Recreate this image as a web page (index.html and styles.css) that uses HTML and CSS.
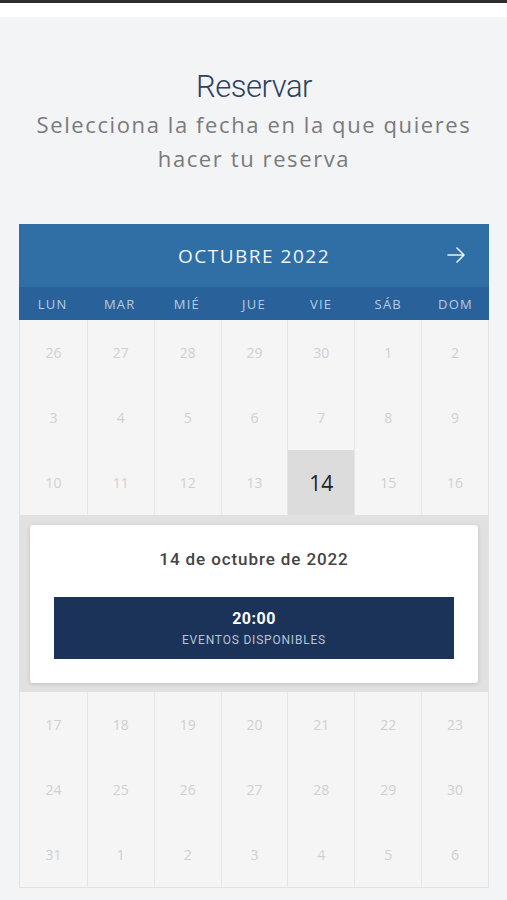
FILE: index.html
```html
<!DOCTYPE html>
<html lang="es">
<head>
    <meta charset="UTF-8">
    <meta name="viewport" content="width=device-width, initial-scale=1.0">
    <title>Reservar</title>
    <link rel="stylesheet" href="styles.css">
</head>
<body>
    <div class="topbar"></div>
    <div class="band"></div>

    <main class="page">
        <div class="intro">
            <h1>Reservar</h1>
            <p>Selecciona la fecha en la que quieres hacer tu reserva</p>
        </div>

        <div class="calendar">
            <div class="cal-head">
                <span class="month">OCTUBRE 2022</span>
                <button class="next" aria-label="Siguiente">
                    <svg width="20" height="20" viewBox="0 0 20 20" fill="none" stroke="currentColor" stroke-width="1.6" stroke-linecap="round" stroke-linejoin="round">
                        <path d="M2 10h16M11 3l7 7-7 7"/>
                    </svg>
                </button>
            </div>
            <div class="weekdays">
                <span>LUN</span><span>MAR</span><span>MIÉ</span><span>JUE</span><span>VIE</span><span>SÁB</span><span>DOM</span>
            </div>

            <div class="week">
                <div class="day">26</div><div class="day">27</div><div class="day">28</div><div class="day">29</div><div class="day">30</div><div class="day">1</div><div class="day">2</div>
            </div>
            <div class="week">
                <div class="day">3</div><div class="day">4</div><div class="day">5</div><div class="day">6</div><div class="day">7</div><div class="day">8</div><div class="day">9</div>
            </div>
            <div class="week">
                <div class="day">10</div><div class="day">11</div><div class="day">12</div><div class="day">13</div><div class="day selected">14</div><div class="day">15</div><div class="day">16</div>
            </div>

            <div class="detail">
                <div class="card">
                    <div class="card-date">14 de octubre de 2022</div>
                    <button class="slot">
                        <span class="slot-time">20:00</span>
                        <span class="slot-label">EVENTOS DISPONIBLES</span>
                    </button>
                </div>
            </div>

            <div class="week">
                <div class="day">17</div><div class="day">18</div><div class="day">19</div><div class="day">20</div><div class="day">21</div><div class="day">22</div><div class="day">23</div>
            </div>
            <div class="week">
                <div class="day">24</div><div class="day">25</div><div class="day">26</div><div class="day">27</div><div class="day">28</div><div class="day">29</div><div class="day">30</div>
            </div>
            <div class="week">
                <div class="day">31</div><div class="day">1</div><div class="day">2</div><div class="day">3</div><div class="day">4</div><div class="day">5</div><div class="day">6</div>
            </div>
        </div>
    </main>
</body>
</html>
```

FILE: styles.css
```css
body {
    margin: 0;
    background: #f3f4f6;
    font-family: "Open Sans", sans-serif;
}

.topbar {
    height: 3px;
    background: #2e2e2e;
}
.band {
    height: 14px;
    background: #fff;
}

.page {
    padding: 0 18px 20px 19px;
}

.intro {
    text-align: center;
    padding-top: 51px;
    padding-bottom: 49px;
}
.intro h1 {
    margin: 0;
    font-family: Roboto, sans-serif;
    font-weight: 300;
    font-size: 31px;
    line-height: 38px;
    color: #2d4160;
    letter-spacing: -0.5px;
}
.intro p {
    margin: 1px auto 0;
    max-width: 470px;
    font-family: "Open Sans", sans-serif;
    font-size: 22px;
    line-height: 34px;
    color: #7a7a7a;
    letter-spacing: 1.6px;
}

.calendar {
    border: 1px solid #e2e2e2;
    border-top: none;
    background: #f5f5f5;
}

.cal-head {
    height: 63px;
    background: #2f6fa5;
    display: flex;
    align-items: center;
    justify-content: center;
    position: relative;
    margin: 0 -1px;
}
.month {
    color: #f2f6fa;
    font-size: 19px;
    letter-spacing: 1.5px;
}
.next {
    position: absolute;
    right: 23px;
    top: 21px;
    background: none;
    border: none;
    padding: 0;
    color: #e8f0f8;
    cursor: pointer;
}

.weekdays {
    height: 33px;
    background: #29619a;
    display: grid;
    grid-template-columns: repeat(7, 1fr);
    align-items: center;
    text-align: center;
    margin: 0 -1px;
}
.weekdays span {
    color: #b9cde2;
    font-size: 13px;
    font-weight: 500;
    letter-spacing: 1.2px;
}

.week {
    display: grid;
    grid-template-columns: repeat(7, 1fr);
}
.day {
    height: 65px;
    display: flex;
    align-items: center;
    justify-content: center;
    font-size: 14px;
    color: #d0d0d0;
    border-left: 1px solid #e6e6e6;
}
.day:first-child {
    border-left: none;
}
.day.selected {
    background: #dcdcdc;
    color: #222;
    font-size: 21px;
}

.detail {
    background: #e1e1e1;
    padding: 10px 10px 9px;
}
.card {
    background: #fff;
    border-radius: 3px;
    box-shadow: 0 1px 4px rgba(0, 0, 0, 0.15);
    padding: 22px 24px 24px;
    text-align: center;
}
.card-date {
    font-family: Roboto, sans-serif;
    font-weight: 500;
    font-size: 17px;
    color: #444;
    line-height: 24px;
    letter-spacing: 0.9px;
}
.slot {
    margin-top: 26px;
    width: 100%;
    height: 62px;
    background: #1b3358;
    border: none;
    display: flex;
    flex-direction: column;
    align-items: center;
    justify-content: center;
    cursor: pointer;
    font-family: Roboto, sans-serif;
}
.slot-time {
    color: #fff;
    font-weight: 700;
    font-size: 16px;
    line-height: 20px;
    letter-spacing: 0.5px;
}
.slot-label {
    color: #b8c3d6;
    font-size: 12px;
    line-height: 16px;
    margin-top: 3px;
    letter-spacing: 0.8px;
}
```
